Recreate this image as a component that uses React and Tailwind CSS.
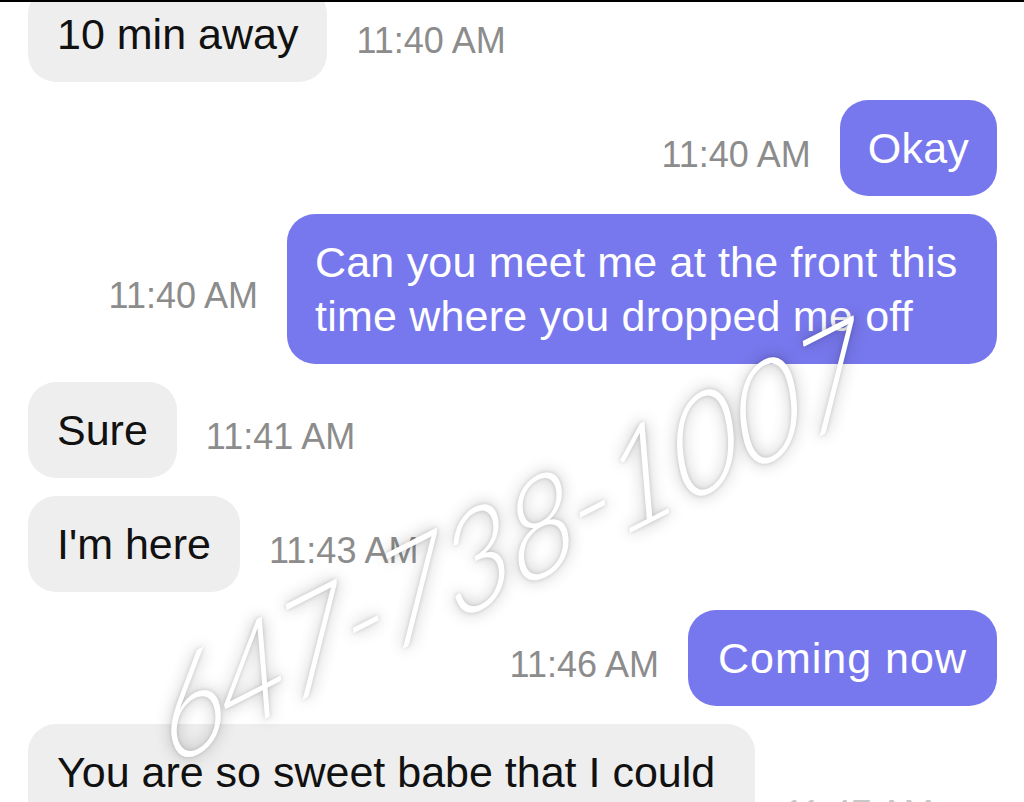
import React from 'react';

const BODY_FONT = { fontFamily: '"Liberation Sans", Arial, sans-serif' };

const messages = [
  { side: 'in', text: '10 min away', time: '11:40 AM' },
  { side: 'out', text: 'Okay', time: '11:40 AM' },
  { side: 'out', text: 'Can you meet me at the front this time where you dropped me off', time: '11:40 AM' },
  { side: 'in', text: 'Sure', time: '11:41 AM' },
  { side: 'in', text: "I'm here", time: '11:43 AM' },
  { side: 'out', text: 'Coming now', time: '11:46 AM', wide: true },
];

function Stamp({ children }) {
  return (
    <span className="shrink-0 text-[36px] leading-none text-[#8c8c8c] translate-y-[7px] whitespace-nowrap">
      {children}
    </span>
  );
}

function Row({ side, text, time, wide }) {
  if (side === 'in') {
    return (
      <div className="flex items-center gap-[29px] pl-[28px]">
        <div className="max-w-[730px] rounded-[28px] bg-[#eeeeee] px-[29px] py-[21px] text-[43px] leading-[54px] text-[#111111]">
          {text}
        </div>
        <Stamp>{time}</Stamp>
      </div>
    );
  }
  return (
    <div className="flex items-center justify-end gap-[29px] pr-[27px]">
      <Stamp>{time}</Stamp>
      <div
        className={
          'max-w-[710px] rounded-[28px] bg-[#7878ee] py-[21px] text-[43px] leading-[54px] text-white ' +
          (wide ? 'px-[30px] tracking-[1px]' : 'px-[28px] tracking-[0.2px]')
        }
      >
        {text}
      </div>
    </div>
  );
}

export default function App() {
  return (
    <div
      className="relative h-[802px] w-[1024px] overflow-hidden border-t-2 border-black bg-white"
      style={BODY_FONT}
    >
      <div className="mt-[-16px] flex flex-col gap-[18px]">
        {messages.map((m, i) => (
          <Row key={i} {...m} />
        ))}
        <div className="flex items-start gap-[29px] pl-[28px]">
          <div className="h-[150px] w-[727px] rounded-[28px] bg-[#eeeeee] px-[29px] py-[21px] text-[43px] leading-[54px] text-[#111111]">
            You are so sweet babe that I could
          </div>
          <span className="mt-[72px] text-[36px] leading-none text-[#c8c8c8]">11:47 AM</span>
        </div>
      </div>

      {/* watermark */}
      <div
        className="pointer-events-none absolute left-[509px] top-[536px] -translate-x-1/2 -translate-y-1/2 -rotate-[27deg] skew-x-[-16deg] whitespace-nowrap text-[131px] font-light italic leading-none tracking-[-5px] text-white [text-shadow:0_0_4px_rgba(0,0,0,0.18),0_0_16px_rgba(0,0,0,0.3)]"
        style={{ fontFamily: 'Lato, "Open Sans", sans-serif' }}
      >
        647-738-1007
      </div>
    </div>
  );
}
